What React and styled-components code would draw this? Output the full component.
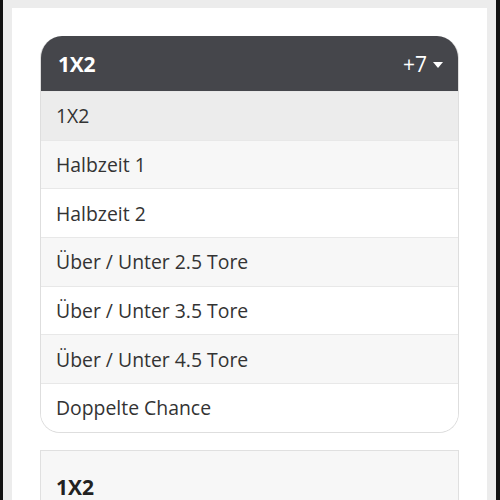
import styled, { createGlobalStyle } from "styled-components";

const GlobalStyle = createGlobalStyle`
  html, body {
    margin: 0;
    padding: 0;
    background: #ececec;
  }
  body {
    font-family: "Open Sans", "Noto Sans", sans-serif;
    border-left: 3px solid #111;
    border-right: 4px solid #111;
    min-height: 500px;
    box-sizing: border-box;
  }
`;

const markets = [
  "1X2",
  "Halbzeit 1",
  "Halbzeit 2",
  "Über / Unter 2.5 Tore",
  "Über / Unter 3.5 Tore",
  "Über / Unter 4.5 Tore",
  "Doppelte Chance",
];

const rowBg = ["#ececec", "#f7f7f7", "#ffffff"];

const App = () => {
  return (
    <>
      <GlobalStyle />
      <Page>
        <Panel>
          <Dropdown>
            <DropdownHeader>
              <h2>1X2</h2>
              <More>
                +7
                <Caret />
              </More>
            </DropdownHeader>
            {markets.map((m, i) => (
              <Option
                key={m}
                $bg={i === 0 ? rowBg[0] : i % 2 === 1 ? rowBg[1] : rowBg[2]}
              >
                {m}
              </Option>
            ))}
          </Dropdown>
          <MarketCard>
            <h3>1X2</h3>
          </MarketCard>
        </Panel>
      </Page>
    </>
  );
};

export default App;

const Page = styled.div`
  padding: 8px 9px 0 9px;
`;

const Panel = styled.div`
  background: #fff;
  padding: 28px 28px 0 28px;
  height: 492px;
  box-sizing: border-box;
  overflow: hidden;
`;

const Dropdown = styled.div`
  border: 1px solid #dedede;
  border-top: none;
  border-radius: 22px 22px 20px 20px;
  overflow: hidden;
  background: #fff;
`;

const DropdownHeader = styled.div`
  display: flex;
  align-items: center;
  justify-content: space-between;
  height: 55px;
  padding: 0 15px 0 17px;
  background: #45464b;
  color: #fff;

  h2 {
    margin: 0;
    font-size: 21px;
    font-weight: 700;
    letter-spacing: -0.3px;
  }
`;

const More = styled.div`
  display: flex;
  align-items: center;
  gap: 6px;
  font-size: 21px;
`;

const Caret = styled.span`
  width: 0;
  height: 0;
  border-left: 5px solid transparent;
  border-right: 5px solid transparent;
  border-top: 6px solid #fff;
  margin-top: 3px;
`;

const Option = styled.div`
  height: 47.7px;
  display: flex;
  align-items: center;
  padding-left: 15px;
  font-size: 19.4px;
  color: #333;
  background: ${(p) => p.$bg};
  border-top: 1px solid #e8e8e8;

  &:first-of-type {
    border-top: none;
  }
`;

const MarketCard = styled.div`
  margin-top: 17px;
  background: #f7f7f7;
  border: 1px solid #e0e0e0;
  padding: 22px 15px;

  h3 {
    margin: 0;
    font-size: 21px;
    font-weight: 700;
    color: #222;
  }
`;
